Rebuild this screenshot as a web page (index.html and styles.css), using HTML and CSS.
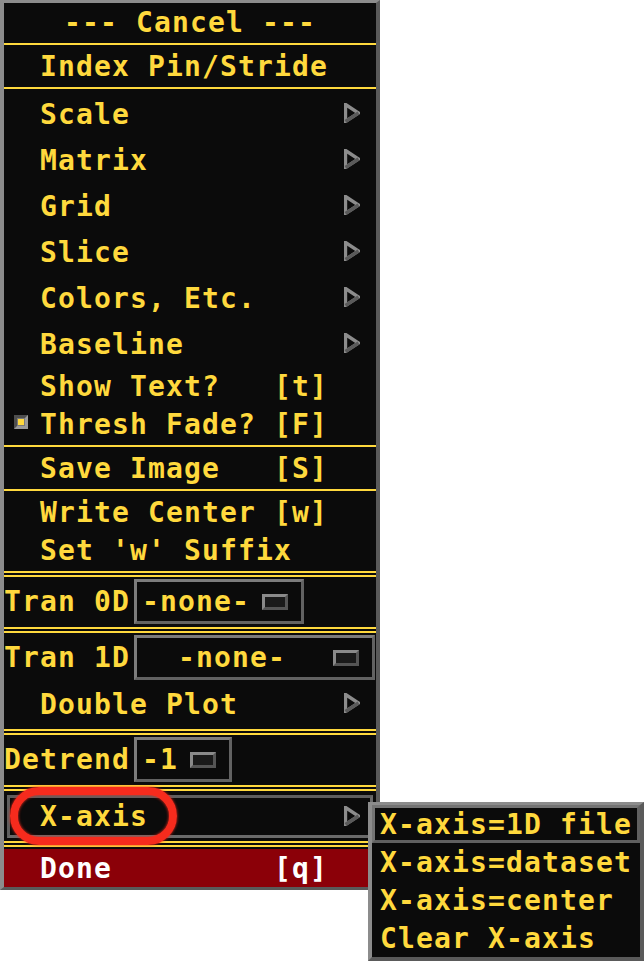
FILE: index.html
```html
<!DOCTYPE html>
<html>
<head>
<meta charset="utf-8">
<link rel="stylesheet" href="styles.css">
</head>
<body>
<div class="screen">
  <div class="menu">
    <div class="row title">--- Cancel ---</div>
    <div class="sep"></div>
    <div class="row btn">Index Pin/Stride</div>
    <div class="sep"></div>
    <div class="row casc"><span>Scale</span><svg class="arrow" viewBox="0 0 16 20"><polygon points="1.5,1.5 14.5,10 1.5,18.5" /><line x1="14.5" y1="10" x2="1.5" y2="18.5" /></svg></div>
    <div class="row casc"><span>Matrix</span><svg class="arrow" viewBox="0 0 16 20"><polygon points="1.5,1.5 14.5,10 1.5,18.5" /><line x1="14.5" y1="10" x2="1.5" y2="18.5" /></svg></div>
    <div class="row casc"><span>Grid</span><svg class="arrow" viewBox="0 0 16 20"><polygon points="1.5,1.5 14.5,10 1.5,18.5" /><line x1="14.5" y1="10" x2="1.5" y2="18.5" /></svg></div>
    <div class="row casc"><span>Slice</span><svg class="arrow" viewBox="0 0 16 20"><polygon points="1.5,1.5 14.5,10 1.5,18.5" /><line x1="14.5" y1="10" x2="1.5" y2="18.5" /></svg></div>
    <div class="row casc"><span>Colors, Etc.</span><svg class="arrow" viewBox="0 0 16 20"><polygon points="1.5,1.5 14.5,10 1.5,18.5" /><line x1="14.5" y1="10" x2="1.5" y2="18.5" /></svg></div>
    <div class="row casc"><span>Baseline</span><svg class="arrow" viewBox="0 0 16 20"><polygon points="1.5,1.5 14.5,10 1.5,18.5" /><line x1="14.5" y1="10" x2="1.5" y2="18.5" /></svg></div>
    <div class="row btn">Show Text?   [t]</div>
    <div class="row btn toggle"><span class="ind"><span class="ind-fill"></span></span>Thresh Fade? [F]</div>
    <div class="sep"></div>
    <div class="row btn">Save Image   [S]</div>
    <div class="sep"></div>
    <div class="row btn">Write Center [w]</div>
    <div class="row btn">Set 'w' Suffix</div>
    <div class="dsep"></div>
    <div class="row opt"><span class="lbl">Tran 0D</span><div class="optbox"><span>-none-</span><span class="oind"></span></div></div>
    <div class="dsep"></div>
    <div class="row opt"><span class="lbl">Tran 1D</span><div class="optbox wide"><span>-none-</span><span class="oind"></span></div></div>
    <div class="row casc"><span>Double Plot</span><svg class="arrow" viewBox="0 0 16 20"><polygon points="1.5,1.5 14.5,10 1.5,18.5" /><line x1="14.5" y1="10" x2="1.5" y2="18.5" /></svg></div>
    <div class="dsep"></div>
    <div class="row opt"><span class="lbl">Detrend</span><div class="optbox"><span>-1</span><span class="oind"></span></div></div>
    <div class="dsep"></div>
    <div class="row casc armed"><span>X-axis</span><svg class="arrow" viewBox="0 0 16 20"><polygon points="1.5,1.5 14.5,10 1.5,18.5" /><line x1="14.5" y1="10" x2="1.5" y2="18.5" /></svg></div>
    <div class="dsep"></div>
    <div class="row btn done">Done         [q]</div>
  </div>
  <div class="ring"></div>
  <div class="submenu">
    <div class="sitem armed">X-axis=1D file</div>
    <div class="sitem">X-axis=dataset</div>
    <div class="sitem">X-axis=center</div>
    <div class="sitem">Clear X-axis</div>
  </div>
</div>
</body>
</html>
```
FILE: styles.css
```css
html, body {
  margin: 0;
  padding: 0;
  background: #ffffff;
}

.screen {
  position: relative;
  width: 644px;
  height: 961px;
  overflow: hidden;
  font-family: "DejaVu Sans Mono", "Liberation Mono", monospace;
  font-weight: bold;
  font-size: 28px;
  letter-spacing: 1.14px;
  color: #ffd93d;
}

.menu {
  box-sizing: border-box;
  width: 380px;
  background: #0b0b0b;
  border-style: solid;
  border-width: 3px 4px 3px 4px;
  border-color: #8c8c8c #5a5a5a #5a5a5a #8c8c8c;
  display: flex;
  flex-direction: column;
}

.row {
  display: flex;
  align-items: center;
  white-space: pre;
  box-sizing: border-box;
}

.title {
  height: 38px;
  justify-content: center;
}

.btn {
  height: 38px;
  padding-left: 36px;
}

.casc {
  height: 46px;
  padding: 0 16px 0 36px;
  justify-content: space-between;
}

.arrow {
  width: 16px;
  height: 20px;
  display: block;
  margin-top: -2px;
}

.arrow polygon {
  fill: none;
  stroke: #8c8c8c;
  stroke-width: 3.4;
  stroke-linejoin: miter;
}

.arrow line {
  stroke: #5a5a5a;
  stroke-width: 3.4;
}

.toggle {
  padding-left: 10px;
}

.ind {
  box-sizing: border-box;
  width: 14px;
  height: 14px;
  margin-right: 12px;
  margin-top: -4px;
  border: 3px solid;
  border-color: #4e4e4e #9a9a9a #9a9a9a #4e4e4e;
  background: #7a7a7a;
  padding: 1px;
}

.ind-fill {
  display: block;
  width: 6px;
  height: 6px;
  background: #ffd93d;
}

.sep {
  height: 2px;
  margin: 2px 0;
  background: #ffd93d;
}

.dsep {
  box-sizing: border-box;
  height: 6px;
  margin: 2px 0;
  border-top: 2px solid #ffd93d;
  border-bottom: 2px solid #ffd93d;
}

.opt {
  height: 46px;
  align-items: flex-start;
}

.lbl {
  height: 45px;
  display: flex;
  align-items: center;
  margin-right: 4px;
}

.optbox {
  box-sizing: border-box;
  height: 45px;
  display: flex;
  align-items: center;
  padding: 0 13px 0 5px;
  border: 3px solid;
  border-color: #7c7c7c #626262 #626262 #7c7c7c;
}

.optbox.wide {
  flex: 1;
  padding-left: 41px;
  margin-right: 1px;
}

.oind {
  box-sizing: border-box;
  width: 26px;
  height: 16px;
  margin-left: 12px;
  border: 3px solid;
  border-color: #8a8a8a #555555 #555555 #8a8a8a;
  background: #1a1a1a;
}

.optbox.wide .oind {
  margin-left: auto;
}

.armed {
  height: 43px;
  margin: 2px 3px 1px 3px;
  padding: 0 10px 0 30px;
  border: 3px solid;
  border-color: #5e5e5e #6a6a6a #6a6a6a #5e5e5e;
}

.done {
  background: #8b0008;
  color: #ffffff;
}

.ring {
  position: absolute;
  left: 10px;
  top: 787px;
  width: 167px;
  height: 58px;
  box-sizing: border-box;
  border: 8px solid #f62b1d;
  border-radius: 30px;
  box-shadow: 0 0 3px #f62b1d, inset 0 0 3px #f62b1d;
}

.submenu {
  position: absolute;
  left: 368px;
  top: 802px;
  width: 276px;
  box-sizing: border-box;
  background: #0b0b0b;
  border-style: solid;
  border-width: 3px 4px 4px 4px;
  border-color: #8c8c8c #5a5a5a #5a5a5a #8c8c8c;
  display: flex;
  flex-direction: column;
}

.sitem {
  box-sizing: border-box;
  height: 38px;
  display: flex;
  align-items: center;
  padding-left: 8px;
  white-space: pre;
}

.sitem.armed {
  margin: 0;
  padding: 0 0 0 5px;
  height: 38px;
  border: 3px solid;
  border-color: #747474 #606060 #606060 #747474;
}
```
